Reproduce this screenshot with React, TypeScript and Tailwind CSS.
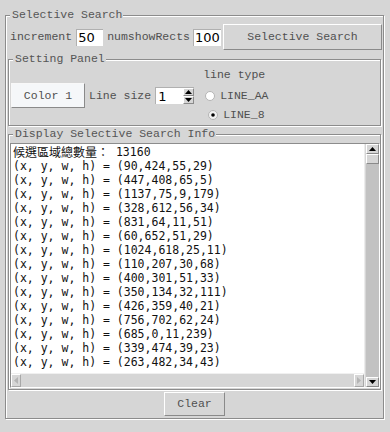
import React from "react";

const lines: string[] = [
  "(90,424,55,29)",
  "(447,408,65,5)",
  "(1137,75,9,179)",
  "(328,612,56,34)",
  "(831,64,11,51)",
  "(60,652,51,29)",
  "(1024,618,25,11)",
  "(110,207,30,68)",
  "(400,301,51,33)",
  "(350,134,32,111)",
  "(426,359,40,21)",
  "(756,702,62,24)",
  "(685,0,11,239)",
  "(339,474,39,23)",
  "(263,482,34,43)",
];

function Group({
  title,
  className,
  children,
}: {
  title: string;
  className: string;
  children?: React.ReactNode;
}) {
  return (
    <div
      className={
        "relative border border-[#8c8c8c] shadow-[inset_1px_1px_0_#fff,1px_1px_0_#fff] " +
        className
      }
    >
      <span className="absolute left-[4px] top-[-8px] pl-[2px] pr-[1px] bg-[#d6d6d6] leading-[14px] text-[11.5px] text-[#555] font-['Liberation_Mono',monospace] whitespace-pre">
        {title}
      </span>
      {children}
    </div>
  );
}

function Tri({ dir, color }: { dir: "up" | "down" | "left" | "right"; color: string }) {
  const pts =
    dir === "up"
      ? "0,4 7,4 3.5,0"
      : dir === "down"
      ? "0,0 7,0 3.5,4"
      : dir === "left"
      ? "4,0 4,7 0,3.5"
      : "0,0 0,7 4,3.5";
  const w = dir === "up" || dir === "down" ? 7 : 4;
  const h = dir === "up" || dir === "down" ? 4 : 7;
  return (
    <svg width={w} height={h} viewBox={`0 0 ${w} ${h}`}>
      <polygon points={pts} fill={color} />
    </svg>
  );
}

function Radio({ checked }: { checked?: boolean }) {
  return (
    <svg width="10" height="10" viewBox="0 0 10 10">
      <circle cx="5" cy="5" r="4.5" fill={checked ? "#f2f2f2" : "#fff"} stroke="#b4b4b4" strokeWidth="1" />
      {checked && <circle cx="5" cy="5" r="1.8" fill="#000" />}
    </svg>
  );
}

export default function App() {
  const label = "text-[11.5px] leading-[14px] text-[#505050] font-['Liberation_Mono',monospace] whitespace-pre";
  return (
    <div className="w-[390px] h-[432px] bg-[#d6d6d6] pl-[5px] pt-[15px] overflow-hidden">
      <Group title="Selective Search" className="w-[379px] h-[404px] flex flex-col">
        {/* Row 1 */}
        <div className="mt-[8px] h-[26px] flex items-center pl-[4px]">
          <span className={label}>increment</span>
          <div className="ml-[4px] w-[27px] h-[17px] bg-white border-l border-t border-[#b0b0b0] flex items-center pl-[1px] text-[13px] text-black font-['DejaVu_Sans',sans-serif] leading-none">
            50
          </div>
          <span className={"ml-[4px] " + label}>numshowRects</span>
          <div className="ml-[3px] w-[28px] h-[17px] bg-white border-l border-t border-[#b0b0b0] flex items-center pl-[1px] text-[13px] text-black font-['DejaVu_Sans',sans-serif] leading-none">
            100
          </div>
          <div className="ml-[2px] w-[159px] h-[26px] border border-t-white border-l-white border-r-[#8a8a8a] border-b-[#8a8a8a] flex items-center justify-center">
            <span className={label}>Selective Search</span>
          </div>
        </div>

        {/* Setting Panel */}
        <Group title="Setting Panel" className="ml-[2px] mt-[9px] w-[373px] h-[67px] flex items-start">
          <div className="ml-[2px] mt-[23px] flex items-center">
            <div className="w-[74px] h-[25px] bg-[#f5f7f9] border border-t-[#f8f8f8] border-l-[#f8f8f8] border-r-[#8a8a8a] border-b-[#8a8a8a] flex items-center justify-center">
              <span className={label}>Color 1</span>
            </div>
            <span className={"ml-[4px] " + label}>Line size</span>
            <div className="ml-[4px] w-[39px] h-[17px] bg-white border-l border-t border-[#b0b0b0] flex items-stretch">
              <div className="flex-1 flex items-center pl-[2px] text-[13px] text-black font-['DejaVu_Sans',sans-serif] leading-none">
                1
              </div>
              <div className="w-[11px] flex flex-col">
                <div className="flex-1 bg-[#d6d6d6] border border-t-white border-l-white border-r-[#8a8a8a] border-b-[#8a8a8a] flex items-center justify-center">
                  <Tri dir="up" color="#000" />
                </div>
                <div className="flex-1 bg-[#d6d6d6] border border-t-white border-l-white border-r-[#8a8a8a] border-b-[#8a8a8a] flex items-center justify-center">
                  <Tri dir="down" color="#000" />
                </div>
              </div>
            </div>
          </div>
          <div className="ml-[9px] mt-[8px] flex flex-col">
            <span className={label}>line type</span>
            <div className="mt-[4px] h-[19px] flex items-center pl-[2px]">
              <Radio />
              <span className={"ml-[5px] " + label}>LINE_AA</span>
            </div>
            <div className="h-[19px] flex items-center pl-[5px]">
              <Radio checked />
              <span className={"ml-[5px] " + label}>LINE_8</span>
            </div>
          </div>
        </Group>

        {/* Display */}
        <Group title="Display Selective Search Info" className="ml-[2px] mt-[8px] w-[373px] h-[256px]">
          <div className="ml-[1px] mt-[8px] w-[370px] h-[245px] border border-t-[#8c8c8c] border-l-[#8c8c8c] border-r-white border-b-white flex">
            <div className="flex-1 flex flex-col min-w-0">
              <div className="flex-1 bg-white pl-[2px] pt-[1px] overflow-hidden font-['DejaVu_Sans_Mono','Noto_Sans_CJK_TC',monospace] text-[11.5px] leading-[14px] text-[#111] whitespace-pre">
                <div className="h-[14px] flex items-center">
                  <span className="text-[12px] leading-[14px] font-['Noto_Sans_CJK_TC',sans-serif]">候選區域總數量：</span>
                  <span className="leading-[14px]"> 13160</span>
                </div>
                {lines.map((l) => (
                  <div key={l} className="h-[14px] leading-[14px]">{"(x, y, w, h) = " + l}</div>
                ))}
              </div>
              <div className="h-[14px] border-t border-[#f0f0f0] bg-[#d6d6d6] flex items-stretch">
                <div className="w-[10px] border border-t-white border-l-white border-r-[#a8a8a8] border-b-[#a8a8a8] flex items-center justify-center">
                  <Tri dir="left" color="#b4b4b4" />
                </div>
                <div className="flex-1" />
                <div className="w-[10px] border border-t-white border-l-white border-r-[#a8a8a8] border-b-[#a8a8a8] flex items-center justify-center">
                  <Tri dir="right" color="#b4b4b4" />
                </div>
              </div>
            </div>
            <div className="w-[15px] border-l border-[#ececec] pl-[1px] bg-[#d6d6d6] flex flex-col">
              <div className="flex-1 bg-[#c2c2c2] flex flex-col">
                <div className="h-[10px] bg-[#d6d6d6] border border-t-white border-l-white border-r-[#8a8a8a] border-b-[#8a8a8a] flex items-center justify-center">
                  <Tri dir="up" color="#000" />
                </div>
                <div className="h-[10px] bg-[#d6d6d6] border border-t-white border-l-white border-r-[#8a8a8a] border-b-[#8a8a8a]" />
                <div className="flex-1" />
                <div className="h-[10px] bg-[#d6d6d6] border border-t-white border-l-white border-r-[#8a8a8a] border-b-[#8a8a8a] flex items-center justify-center">
                  <Tri dir="down" color="#000" />
                </div>
              </div>
            </div>
          </div>
        </Group>

        {/* Clear */}
        <div className="mt-[2px] mx-auto w-[61px] h-[24px] border border-t-white border-l-white border-r-[#8a8a8a] border-b-[#8a8a8a] flex items-center justify-center">
          <span className={label}>Clear</span>
        </div>
      </Group>
    </div>
  );
}
